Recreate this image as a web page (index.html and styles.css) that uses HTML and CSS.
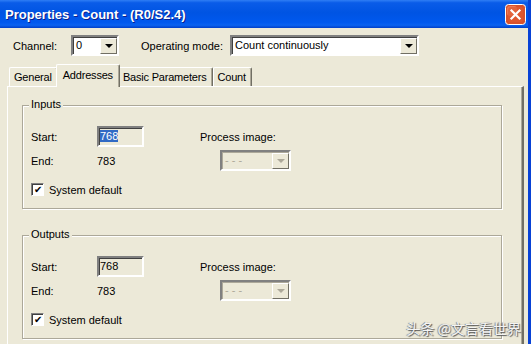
FILE: index.html
```html
<!DOCTYPE html>
<html lang="en">
<head>
  <meta charset="UTF-8">
  <title>Properties - Count - (R0/S2.4)</title>
  <link rel="stylesheet" href="styles.css">
</head>
<body>

<div class="window">
  <div class="titlebar">
    <span class="title">Properties - Count - (R0/S2.4)</span>
    <svg class="close-btn" width="21" height="21" viewBox="0 0 21 21">
      <rect x="0.5" y="0.5" width="20" height="20" rx="3" fill="#d9512b" stroke="#ffffff"/>
      <rect x="2" y="2" width="10" height="10" rx="3" fill="#ec7a55"/>
      <rect x="3" y="3" width="15" height="15" rx="3" fill="#e05a32" opacity="0.7"/>
      <path d="M6.5 6.5 L14.5 14.5 M14.5 6.5 L6.5 14.5" stroke="#ffffff" stroke-width="2.2" stroke-linecap="square"/>
    </svg>
  </div>

  <div class="body">
    <div class="toprow">
      <label class="lbl-channel">Channel:</label>
      <div class="combo combo-channel"><span class="val">0</span><span class="btn"><i class="arrow"></i></span></div>
      <label class="lbl-mode">Operating mode:</label>
      <div class="combo combo-mode"><span class="val">Count continuously</span><span class="btn"><i class="arrow"></i></span></div>
    </div>

    <div class="tabs">
      <div class="tab">General</div>
      <div class="tab active">Addresses</div>
      <div class="tab">Basic Parameters</div>
      <div class="tab">Count</div>
    </div>

    <div class="panel">
      <div class="group">
        <span class="legend">Inputs</span>
        <div class="grid">
          <span>Start:</span>
          <div class="field"><span class="sel">768</span></div>
          <span class="pi">Process image:</span>
          <span>End:</span>
          <span>783</span>
          <div class="combo combo-pi disabled"><span class="val">- - -</span><span class="btn"><i class="arrow"></i></span></div>
          <label class="check"><span class="box">&#10004;</span>System default</label>
        </div>
      </div>

      <div class="group">
        <span class="legend">Outputs</span>
        <div class="grid">
          <span>Start:</span>
          <div class="field"><span>768</span></div>
          <span class="pi">Process image:</span>
          <span>End:</span>
          <span>783</span>
          <div class="combo combo-pi disabled"><span class="val">- - -</span><span class="btn"><i class="arrow"></i></span></div>
          <label class="check"><span class="box">&#10004;</span>System default</label>
        </div>
      </div>
    </div>

    <div class="watermark">头条 @文言看世界</div>
  </div>
</div>

</body>
</html>
```

FILE: styles.css
```css
body { margin: 0; font-family: "Liberation Sans", Arial, sans-serif; font-size: 11px; color: #000; background: #ECE9D8; overflow: hidden; }

.window { width: 528px; height: 344px; border-right: 3px solid #0842d6; background: #ECE9D8; position: relative; }

.titlebar {
  height: 28px;
  display: flex;
  align-items: center;
  justify-content: space-between;
  padding: 0 2px 0 5px;
  background: linear-gradient(#2f7ef5 0, #0a5ce8 10%, #0054e3 45%, #0058ee 80%, #0a62f0 90%, #003ec8 100%);
}
.title { color: #fff; font-weight: bold; font-size: 13px; text-shadow: 1px 1px 0 #0a1e8c; margin-top: 1px; }
.close-btn { display: block; margin-top: 1px; }

.body { height: 316px; position: relative; }

.toprow { display: flex; align-items: center; padding: 7px 0 0 13px; height: 21px; }
.lbl-channel { width: 58px; }
.lbl-mode { margin-left: 22px; width: 89px; }

.combo {
  height: 21px; box-sizing: border-box;
  display: flex; align-items: stretch;
  background: #fff;
  border: 2px solid; border-color: #808080 #fff #fff #808080;
  box-shadow: inset 1px 1px 0 #404040;
}
.combo .val { flex: 1; padding: 2px 0 0 3px; white-space: nowrap; overflow: hidden; }
.combo .btn {
  width: 15px; margin: 1px 0 0 0;
  background: #ECE9D8;
  border: 1px solid; border-color: #fff #716F64 #716F64 #fff;
  display: flex; align-items: center; justify-content: center;
}
.arrow { width: 0; height: 0; border: 4px solid transparent; border-top: 4px solid #000; border-bottom: 0; }
.combo-channel { width: 48px; }
.combo-mode { width: 189px; }

.combo.disabled { background: #ECE9D8; border-color: #808080 #fff #fff #808080; box-shadow: inset 1px 1px 0 #ACA899; }
.combo.disabled .val { color: #ACA899; }
.combo.disabled .arrow { border-top-color: #ACA899; }
.combo-pi { width: 71px; margin-left: 20px; }

.tabs { display: flex; align-items: flex-end; height: 22px; margin: 8px 0 0 9px; position: relative; z-index: 1; }
.tab {
  height: 19px; box-sizing: border-box;
  padding: 3px 5px 0 4px;
  border: 1px solid; border-color: #fff #716F64 transparent #fff;
  border-bottom: 0;
  border-radius: 2px 2px 0 0;
  box-shadow: inset -1px 0 0 #ACA899;
  white-space: nowrap;
  letter-spacing: -0.2px;
}
.tab.active { height: 23px; margin: 0 -2px -1px; padding: 4px 6px 0; background: #ECE9D8; position: relative; z-index: 2; }

.panel {
  margin-left: 7px;
  border-top: 1px solid #fff; border-left: 1px solid #fff;
  border-right: 2px solid #716F64;
  box-shadow: inset -1px 0 0 #ACA899;
  padding: 18px 0 0 14px;
  box-sizing: border-box;
  width: 517px; height: 260px;
}

.group {
  position: relative;
  width: 480px; height: 104px; box-sizing: border-box;
  border: 1px solid #ACA899;
  box-shadow: inset 1px 1px 0 #fff, 1px 1px 0 #fff;
  padding: 20px 0 0 8px;
  margin-bottom: 26px;
}
.legend { position: absolute; top: -8px; left: 6px; padding: 0 2px; background: #ECE9D8; }

.grid { display: grid; grid-template-columns: 66px 103px auto; grid-template-rows: 21px 21px; row-gap: 3px; align-items: center; }

.field {
  width: 47px; height: 21px; box-sizing: border-box;
  border: 2px solid; border-color: #808080 #fff #fff #808080;
  box-shadow: inset 1px 1px 0 #404040;
  padding: 2px 0 0 1px;
}
.sel { background: #316AC5; color: #fff; }

.check { grid-column: 1 / 4; display: flex; align-items: center; margin-top: 9px; }
.box {
  width: 13px; height: 13px; box-sizing: border-box;
  background: #fff;
  border: 1px solid; border-color: #808080 #fff #fff #808080;
  box-shadow: inset 1px 1px 0 #404040;
  font-size: 10px; line-height: 11px; text-align: center;
  margin-right: 5px;
}

.watermark {
  position: absolute; right: 7px; bottom: 6px;
  font-family: "Noto Sans CJK SC", sans-serif; font-size: 14px;
  color: #f4f4f4;
  text-shadow: 1px 1px 1px #555, -1px 0 1px #777;
}
```
